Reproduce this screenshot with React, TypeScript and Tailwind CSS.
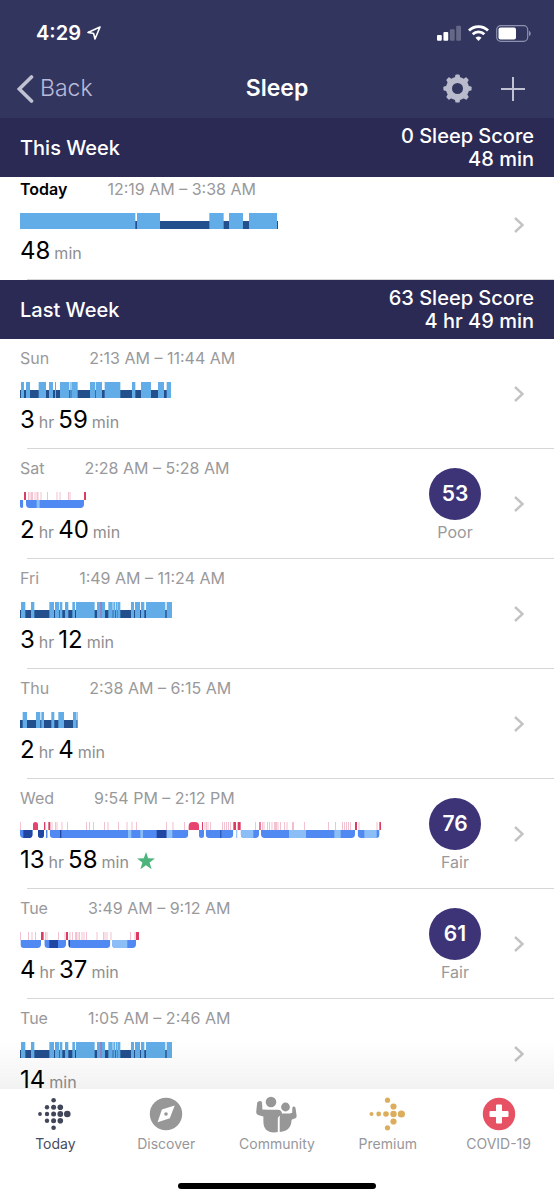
import { useId, type ReactNode } from 'react';

// Chart values are in thirds of a pixel, 48 units high.
type Span = [start: number, end: number];

interface ClassicChart {
  kind: 'classic';
  width: number;
  restless: Span[];
  awake?: Span[];
}

interface StagesChart {
  kind: 'stages';
  width: number;
  blocks: Span[];
  deep: Span[];
  rem: Span[];
  wake: Span[];
  longWake?: Span[];
  brief: number[];
}

interface SleepLog {
  id: string;
  day: string;
  time: string;
  hours?: number;
  minutes: number;
  chart: ClassicChart | StagesChart;
  score?: number;
  rating?: string;
  starred?: boolean;
}

const fridayChart: ClassicChart = {
  kind: 'classic',
  width: 456,
  restless: [
    [3, 16], [33, 43], [88, 102], [105, 118], [120, 127], [135, 145], [157, 165], [168, 224],
    [231, 255], [265, 278], [280, 286], [288, 293], [294, 301], [333, 342], [345, 360],
    [363, 373], [378, 436], [440, 456],
  ],
  awake: [[241, 246]],
};

const today: SleepLog = {
  id: 'today',
  day: 'Today',
  time: '12:19 AM – 3:38 AM',
  minutes: 48,
  chart: {
    kind: 'classic',
    width: 775,
    restless: [[0, 346], [351, 420], [568, 611], [627, 669], [687, 771]],
  },
};

const lastWeek: SleepLog[] = [
  {
    id: 'sun',
    day: 'Sun',
    time: '2:13 AM – 11:44 AM',
    hours: 3,
    minutes: 59,
    chart: {
      kind: 'classic',
      width: 453,
      restless: [
        [3, 12], [18, 30], [56, 78], [87, 99], [105, 108], [120, 147], [149, 152], [154, 173],
        [210, 226], [228, 246], [254, 301], [336, 346], [363, 393], [414, 432], [440, 453],
      ],
    },
  },
  {
    id: 'sat',
    day: 'Sat',
    time: '2:28 AM – 5:28 AM',
    hours: 2,
    minutes: 40,
    score: 53,
    rating: 'Poor',
    chart: {
      kind: 'stages',
      width: 198,
      blocks: [[0, 10], [18, 192]],
      deep: [],
      rem: [[50, 59]],
      wake: [[12, 18], [192, 198]],
      brief: [25, 29, 33, 37, 44, 50, 53, 62, 81, 110, 119, 145, 149],
    },
  },
  { id: 'fri', day: 'Fri', time: '1:49 AM – 11:24 AM', hours: 3, minutes: 12, chart: fridayChart },
  {
    id: 'thu',
    day: 'Thu',
    time: '2:38 AM – 6:15 AM',
    hours: 2,
    minutes: 4,
    chart: {
      kind: 'classic',
      width: 173,
      restless: [[8, 21], [48, 61], [64, 72], [94, 103], [115, 132], [159, 169], [170, 173]],
    },
  },
  {
    id: 'wed',
    day: 'Wed',
    time: '9:54 PM – 2:12 PM',
    hours: 13,
    minutes: 58,
    score: 76,
    rating: 'Fair',
    starred: true,
    chart: {
      kind: 'stages',
      width: 1084,
      blocks: [
        [0, 38], [54, 72], [78, 83], [89, 505], [537, 552], [557, 640], [649, 652], [662, 717],
        [723, 1005], [1013, 1079],
      ],
      deep: [[10, 38], [54, 72], [120, 124], [410, 440], [601, 604]],
      rem: [[324, 334], [361, 369], [440, 457], [649, 652], [662, 700], [807, 858], [943, 962], [1033, 1070]],
      wake: [[72, 76], [85, 91], [546, 549], [640, 648], [653, 662], [718, 722], [818, 820], [1005, 1011], [1078, 1084]],
      longWake: [[39, 54], [506, 537]],
      brief: [
        0, 95, 105, 110, 125, 142, 198, 208, 220, 253, 263, 295, 320, 335, 348, 439, 458, 493,
        554, 558, 563, 570, 607, 612, 618, 625, 631, 706, 726, 731, 742, 748, 755, 762, 765,
        769, 773, 780, 792, 800, 853, 925, 945, 967, 972, 978, 984, 990, 1016, 1070,
      ],
    },
  },
  {
    id: 'tue',
    day: 'Tue',
    time: '3:49 AM – 9:12 AM',
    hours: 4,
    minutes: 37,
    score: 61,
    rating: 'Fair',
    chart: {
      kind: 'stages',
      width: 357,
      blocks: [[1, 63], [73, 138], [145, 271], [276, 348]],
      deep: [[88, 114], [145, 150]],
      rem: [[276, 322]],
      wake: [[63, 71], [138, 144], [348, 357]],
      brief: [
        0, 25, 35, 46, 76, 80, 114, 134, 149, 156, 165, 169, 173, 178, 185, 191, 199, 230,
        249, 254, 260, 272, 331, 344,
      ],
    },
  },
  { id: 'tue-early', day: 'Tue', time: '1:05 AM – 2:46 AM', minutes: 14, chart: fridayChart },
];

function SleepChart({ chart }: { chart: ClassicChart | StagesChart }) {
  const clip = useId();
  const bars = (spans: Span[], y: number, color: string) =>
    spans.map(([a, b]) => <rect key={`${color}${a}`} x={a} y={y} width={b - a} height={48 - y} fill={color} />);

  return (
    <svg
      className="block h-4 max-w-full"
      style={{ width: chart.width / 3 }}
      viewBox={`0 0 ${chart.width} 48`}
      preserveAspectRatio="none"
      aria-hidden="true"
    >
      {chart.kind === 'classic' ? (
        <>
          <rect y="24" width={chart.width} height="24" fill="#234f8d" />
          {bars(chart.restless, 0, '#62ade7')}
          {bars(chart.awake ?? [], 0, '#a878b8')}
        </>
      ) : (
        <>
          <clipPath id={clip}>
            {chart.blocks.map(([a, b]) => {
              const r = Math.min(11, (b - a) / 2);
              return (
                <path
                  key={a}
                  d={`M${a} 24H${b}V${48 - r}Q${b} 48 ${b - r} 48H${a + r}Q${a} 48 ${a} ${48 - r}Z`}
                />
              );
            })}
          </clipPath>
          <g clipPath={`url(#${clip})`}>
            {bars(chart.blocks, 24, '#5089f1')}
            {bars(chart.deep, 24, '#2146a1')}
            {bars(chart.rem, 24, '#8bbef6')}
          </g>
          {chart.brief.map((x) => (
            <rect key={x} x={x} width="2" height="24" fill="#d73462" opacity="0.45" />
          ))}
          {chart.wake.map(([a, b]) => (
            <rect key={a} x={a} width={b - a} height="24" rx="1" fill="#dc3c64" />
          ))}
          {chart.longWake?.map(([a, b]) => {
            const r = Math.min(12, (b - a) / 2);
            return (
              <path
                key={a}
                d={`M${a} 24V${r}Q${a} 0 ${a + r} 0H${b - r}Q${b} 0 ${b} ${r}V24Z`}
                fill="#e6446f"
              />
            );
          })}
        </>
      )}
    </svg>
  );
}

function WeekHeader({ title, score, total }: { title: string; score: number; total: string }) {
  return (
    <header className="sticky top-0 z-10 flex items-center justify-between bg-[#2b2a55] px-5 pt-[7px] pb-1.5 text-xl leading-[23px] font-medium text-white">
      <h2>{title}</h2>
      <p className="text-right">
        {score} Sleep Score
        <br />
        {total}
      </p>
    </header>
  );
}

function SleepRow({ log, current = false }: { log: SleepLog; current?: boolean }) {
  return (
    <li>
      <a href={`#${log.id}`} className="flex h-[109px] items-center pr-[30px] pl-5">
        <div className="min-w-0 flex-1 self-start pt-[9px]">
          <div className="flex gap-10 text-base leading-5 text-[#99999b]">
            <span className={current ? 'font-semibold text-black' : ''}>{log.day}</span>
            <span>{log.time}</span>
          </div>
          <div className="mt-3.5">
            <SleepChart chart={log.chart} />
          </div>
          <p className="mt-2 flex items-baseline gap-1 text-base leading-7 text-[#8e8e90]">
            {log.hours !== undefined && (
              <>
                <span className="text-2xl leading-7 text-black">{log.hours}</span>
                <span>hr</span>
              </>
            )}
            <span className="text-2xl leading-7 text-black">{log.minutes}</span>
            <span>min</span>
            {log.starred && (
              <svg className="ml-1 size-[18px] self-center" viewBox="0 0 18 18" fill="#4db57c" role="img" aria-label="Goal met">
                <path d="M9 0l2.2 6.3 6.8.2-5.4 4.1 2 6.7L9 13.3l-5.6 4 2-6.7L0 6.5l6.8-.2z" />
              </svg>
            )}
          </p>
        </div>
        {log.score !== undefined && (
          <div className="mr-[33px] w-[52px] pt-1 text-center">
            <div className="flex size-[52px] items-center justify-center rounded-full bg-[#3d3477] text-[21px] font-semibold text-white">
              {log.score}
            </div>
            <div className="text-base leading-6 text-[#99999b]">{log.rating}</div>
          </div>
        )}
        <svg className="h-4 w-2.5" viewBox="0 0 10 16" fill="none" stroke="#c3c3c5" strokeWidth="2.4" aria-hidden="true">
          <path d="M1 1l7.6 7L1 15" />
        </svg>
      </a>
      <div className="ml-[27px] h-px bg-[#d6d6d8]" />
    </li>
  );
}

function Dots({ dots, color }: { dots: number[][]; color: string }) {
  return (
    <svg className="size-[34px] overflow-visible" viewBox="0 0 34 34" fill={color} aria-hidden="true">
      {dots.map(([x, y, r]) => (
        <circle key={`${x}-${y}`} cx={x} cy={y} r={r} />
      ))}
    </svg>
  );
}

const tabs: { label: string; color: string; icon: ReactNode }[] = [
  {
    label: 'Today',
    color: 'text-[#454b5f]',
    icon: (
      <Dots
        color="#414659"
        dots={[
          [15.6, 3.2, 2.3], [9, 10.2, 2.2], [15.6, 10.2, 2.5], [22.3, 10.2, 2.8], [2, 17, 1.9], [9, 17, 2.2],
          [15.6, 17, 2.5], [22.3, 17, 2.9], [29.3, 17, 3.3], [9, 23.8, 2.2], [15.6, 23.8, 2.5], [22.3, 23.8, 2.8],
          [15.6, 30.8, 2.3],
        ]}
      />
    ),
  },
  {
    label: 'Discover',
    color: 'text-[#97979a]',
    icon: (
      <svg className="size-[34px]" viewBox="0 0 34 34" aria-hidden="true">
        <circle cx="17" cy="17" r="16.2" fill="#979797" />
        <path d="M25.7 8.6L20.8 21.2 8.6 25.3 12.9 12.6z" fill="#fff" />
        <circle cx="17" cy="17" r="1.8" fill="#979797" />
      </svg>
    ),
  },
  {
    label: 'Community',
    color: 'text-[#97979a]',
    icon: (
      <svg className="h-[37px] w-[41px]" viewBox="0 0 41 37" fill="#979797" aria-hidden="true">
        <circle cx="15" cy="6" r="5.3" />
        <path d="M3.2 5.2c1.5-.5 2.8.4 2.9 2l.3 6.300 6.200.300h9.200c3 0 4.200 1.800 4.200 4v2.200c-2.300-.8-4.200.6-4.200 3.200v12.800c-1 .300-2.200.500-3.500.500-7.300 0-10.900-4-10.900-11v-5l-4.500-1.200C1.100 18.300.1 17.600.2 15.700L1.100 7.200c.1-1.100.9-1.700 2.100-2z" />
        <circle cx="29.500" cy="11" r="4.400" />
        <path d="M23.700 22.500c.1-3.700 1.300-5 3.500-5h6.700l2.300-.8.100-4.600c.1-2.200 2.700-2.300 3.200-.2l1.100 7.500c.2 1.700-.5 2.600-2 3.200l-3 1.200c-.2 7-3.400 11.800-11.900 12.200z" />
      </svg>
    ),
  },
  {
    label: 'Premium',
    color: 'text-[#97979a]',
    icon: (
      <Dots
        color="#dcae5c"
        dots={[
          [16.5, 3.2, 2.6], [22.5, 9.5, 3.1], [0.5, 17, 2], [7.7, 17, 2.4], [15, 17, 2.8],
          [22.5, 17, 3.2], [30.4, 17, 3.6], [22.5, 24.500, 3.1], [16.5, 30.8, 2.6],
        ]}
      />
    ),
  },
  {
    label: 'COVID-19',
    color: 'text-[#97979a]',
    icon: (
      <svg className="size-[34px]" viewBox="0 0 34 34" aria-hidden="true">
        <circle cx="17" cy="17" r="16.2" fill="#e65263" />
        <path d="M15 7.500h4a1 1 0 0 1 1 1V14h5.500a1 1 0 0 1 1 1v4a1 1 0 0 1-1 1H20v5.500a1 1 0 0 1-1 1h-4a1 1 0 0 1-1-1V20H8.500a1 1 0 0 1-1-1v-4a1 1 0 0 1 1-1H14V8.500a1 1 0 0 1 1-1z" fill="#fff" />
      </svg>
    ),
  },
];

function StatusBar() {
  return (
    <div className="flex h-[59px] items-end justify-between pr-[23px] pb-3 pl-9 text-white">
      <div className="flex items-center gap-1.5 text-xl leading-7 font-semibold">
        4:29
        <svg className="size-3.5" viewBox="0 0 14 14" fill="none" stroke="currentColor" strokeWidth="1.6" strokeLinejoin="round" aria-hidden="true">
          <path d="M13 1L1 6.400l5.600 1.100L8 13z" />
        </svg>
      </div>
      <div className="flex h-7 items-center gap-[7px]">
        <svg className="h-4 w-6" viewBox="0 0 25 16" fill="currentColor" aria-hidden="true">
          <rect y="10" width="5" height="6" rx="1" />
          <rect x="6.700" y="7" width="5" height="9" rx="1" />
          <rect x="13.400" y="4" width="5" height="12" rx="1" opacity="0.25" />
          <rect x="20" y="0.500" width="5" height="15.500" rx="1" opacity="0.25" />
        </svg>
        <svg className="h-4 w-[21px]" viewBox="0 0 21 16" fill="none" stroke="currentColor" strokeWidth="2.800" aria-hidden="true">
          <path d="M1 5.600a13.500 13.500 0 0 1 19 0M4.700 9.300a8.300 8.300 0 0 1 11.600 0" />
          <path d="M10.500 16l-3-3.300a4.600 4.600 0 0 1 6 0z" fill="currentColor" stroke="none" />
        </svg>
        <svg className="h-[17px] w-[35px]" viewBox="0 0 35 17" aria-hidden="true">
          <rect x="0.700" y="0.700" width="31" height="15.600" rx="4" fill="none" stroke="#8d90ae" strokeWidth="1.200" />
          <rect x="2.500" y="2.500" width="17.500" height="12" rx="2" fill="#fff" />
          <path d="M33 6c2.300.6 2.300 4.400 0 5z" fill="#8d90ae" />
        </svg>
      </div>
    </div>
  );
}

export default function App() {
  return (
    <div className="flex h-screen flex-col bg-white font-[Inter,'Liberation_Sans',sans-serif]">
      <div className="bg-[#32365f]">
        <StatusBar />
        <div className="grid h-[59px] grid-cols-[1fr_auto_1fr] items-center px-[17px]">
          <button type="button" className="flex items-center gap-1.5 justify-self-start text-[23px] font-light text-[#b9bad9]">
            <svg className="h-7 w-[17px]" viewBox="0 0 17 28" fill="none" stroke="#c0c1d2" strokeWidth="3.600" strokeLinecap="round" aria-hidden="true">
              <path d="M14.500 2L2.300 14l12.200 12" />
            </svg>
            Back
          </button>
          <h1 className="text-[23px] font-semibold text-white">Sleep</h1>
          <div className="flex items-center gap-[29px] justify-self-end pr-3">
            <button type="button" aria-label="Settings">
              <svg className="block size-[29px]" viewBox="0 0 29 29" aria-hidden="true">
                <circle cx="14.500" cy="14.500" r="8.500" fill="none" stroke="#b9bacb" strokeWidth="6" />
                {[0, 45, 90, 135, 180, 225, 270, 315].map((deg) => (
                  <path key={deg} d="M11.500 5l.9-4q.2-.6.800-.6h2.600q.6 0 .8.600L17.500 5z" fill="#b9bacb" transform={`rotate(${deg} 14.500 14.500)`} />
                ))}
              </svg>
            </button>
            <button type="button" aria-label="Add sleep log">
              <svg className="block size-6" viewBox="0 0 24 24" stroke="#c0c1d2" strokeWidth="2" aria-hidden="true">
                <path d="M12 0v24M0 12h24" />
              </svg>
            </button>
          </div>
        </div>
      </div>

      <div className="relative min-h-0 flex-1">
        <main className="h-full overflow-y-auto [scrollbar-width:none]">
          <section>
            <WeekHeader title="This Week" score={0} total="48 min" />
            {/* first row tucks slightly under the header */}
            <ul className="-mt-[7px]">
              <SleepRow log={today} current />
            </ul>
          </section>
          <section>
            <WeekHeader title="Last Week" score={63} total="4 hr 49 min" />
            <ul>
              {lastWeek.map((log) => (
                <SleepRow key={log.id} log={log} />
              ))}
            </ul>
          </section>
        </main>
        <div className="pointer-events-none absolute inset-x-0 bottom-0 z-10 h-12 bg-linear-to-t from-black/5 to-transparent" />
      </div>

      <nav className="bg-white">
        <ul className="grid grid-cols-5 pt-[5px]">
          {tabs.map((tab) => (
            <li key={tab.label}>
              <a href={`#${tab.label.toLowerCase()}`} className={`flex flex-col items-center text-sm leading-5 ${tab.color}`}>
                <span className="flex h-10 items-center">{tab.icon}</span>
                {tab.label}
              </a>
            </li>
          ))}
        </ul>
        <div className="mx-auto mt-[29px] mb-[11px] h-1.5 w-[198px] rounded-full bg-black" />
      </nav>
    </div>
  );
}
